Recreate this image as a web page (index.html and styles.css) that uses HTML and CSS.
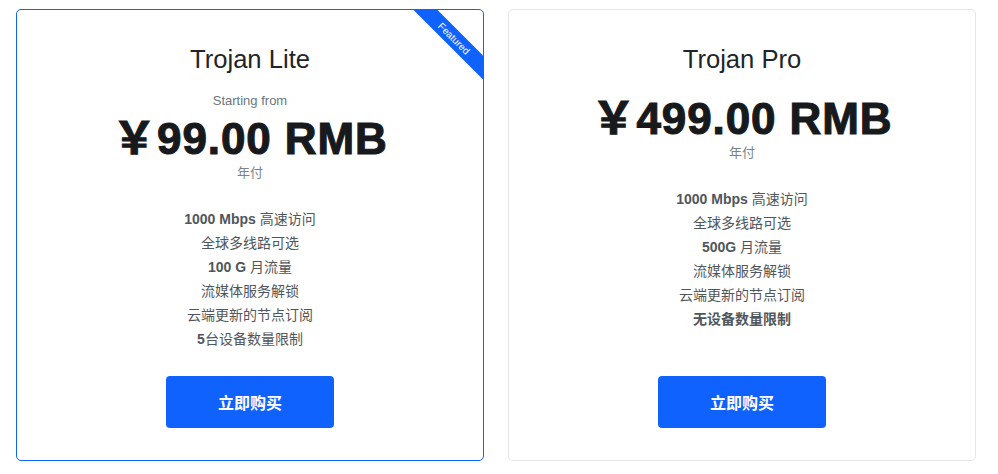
FILE: index.html
```html
<!DOCTYPE html>
<html lang="zh">
<head>
<meta charset="utf-8">
<title>Pricing</title>
<link rel="stylesheet" href="styles.css">
</head>
<body>
<div class="plans">
  <div class="card featured">
    <div class="ribbon">Featured</div>
    <h3 class="title">Trojan Lite</h3>
    <div class="from">Starting from</div>
    <div class="price">￥99.00 RMB</div>
    <div class="period">年付</div>
    <ul class="features">
      <li><b>1000 Mbps</b> 高速访问</li>
      <li>全球多线路可选</li>
      <li><b>100 G</b> 月流量</li>
      <li>流媒体服务解锁</li>
      <li>云端更新的节点订阅</li>
      <li><b>5</b>台设备数量限制</li>
    </ul>
    <a class="buy" href="#">立即购买</a>
  </div>
  <div class="card">
    <h3 class="title">Trojan Pro</h3>
    <div class="price price-pro">￥499.00 RMB</div>
    <div class="period">年付</div>
    <ul class="features">
      <li><b>1000 Mbps</b> 高速访问</li>
      <li>全球多线路可选</li>
      <li><b>500G</b> 月流量</li>
      <li>流媒体服务解锁</li>
      <li>云端更新的节点订阅</li>
      <li><b>无设备数量限制</b></li>
    </ul>
    <a class="buy" href="#">立即购买</a>
  </div>
</div>
</body>
</html>
```
FILE: styles.css
```css
* { box-sizing: border-box; }
html, body { margin: 0; padding: 0; background: #fff; }
body {
  font-family: "Liberation Sans", Arial, "Noto Sans CJK SC", sans-serif;
  color: #212529;
}
.plans {
  display: grid;
  grid-template-columns: 468px 468px;
  column-gap: 24px;
  padding: 9px 0 0 16px;
}
.card {
  position: relative;
  overflow: hidden;
  height: 452px;
  border: 1px solid #e3e5e8;
  border-radius: 5px;
  display: flex;
  flex-direction: column;
  align-items: center;
  padding: 34px 0 32px;
  text-align: center;
}
.card.featured { border-color: #1062fe; }
.ribbon {
  position: absolute;
  top: 20px;
  right: -21px;
  width: 100px;
  height: 17px;
  line-height: 17px;
  background: #1062fe;
  color: #fff;
  font-size: 10px;
  text-align: center;
  transform: rotate(45deg);
}
.title {
  margin: 0;
  font-size: 25.6px;
  line-height: 30px;
  font-weight: 400;
  color: #212529;
}
.from {
  margin-top: 17px;
  font-size: 13px;
  line-height: 20px;
  color: #6c757d;
}
.price {
  margin-top: 6px;
  font-size: 44px;
  line-height: 44px;
  font-weight: 700;
  color: #17191c;
  white-space: nowrap;
  letter-spacing: 0.9px;
  -webkit-text-stroke: 1.1px #17191c;
}
.price-pro { margin-top: 23px; }
.period {
  margin-top: 2px;
  font-size: 13px;
  line-height: 20px;
  color: #7a828a;
}
.features {
  list-style: none;
  margin: 24px 0 0;
  padding: 0;
  font-size: 14px;
  line-height: 24px;
  color: #50565c;
}
.features b { font-weight: 700; }
.buy {
  margin-top: auto;
  display: flex;
  align-items: center;
  justify-content: center;
  width: 168px;
  height: 52px;
  border-radius: 4px;
  background: #1062fe;
  color: #fff;
  font-size: 16px;
  font-weight: 700;
  text-decoration: none;
}
```
